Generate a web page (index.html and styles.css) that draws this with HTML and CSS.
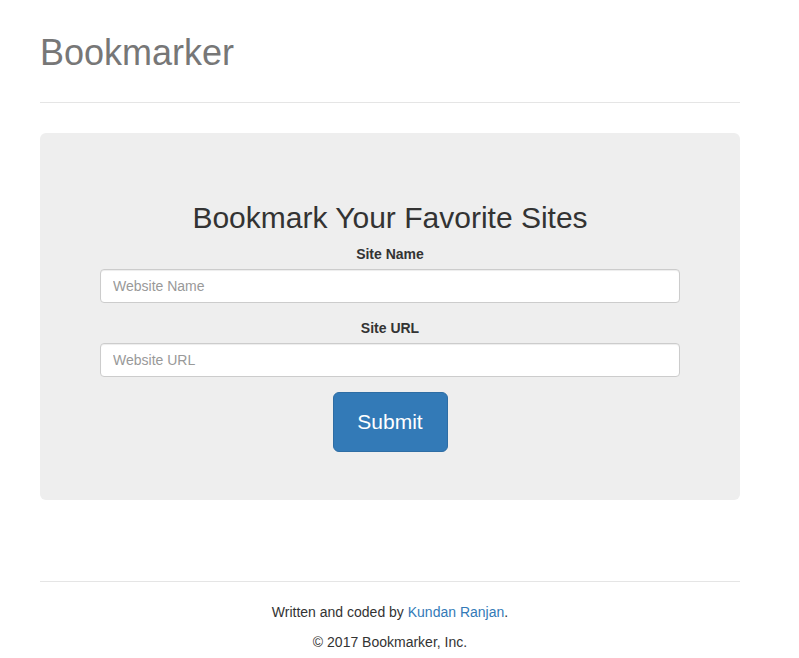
FILE: index.html
```html
<!DOCTYPE html>
<html lang="en">
<head>
<meta charset="utf-8">
<title>Bookmarker</title>
<link rel="stylesheet" href="styles.css">
</head>
<body>
<div class="container">
  <header class="header">
    <h1 class="brand">Bookmarker</h1>
  </header>
  <main class="jumbotron">
    <h2 class="title">Bookmark Your Favorite Sites</h2>
    <form class="form">
      <div class="form-group">
        <label class="label" for="siteName">Site Name</label>
        <input class="input" type="text" id="siteName" placeholder="Website Name">
      </div>
      <div class="form-group">
        <label class="label" for="siteUrl">Site URL</label>
        <input class="input" type="text" id="siteUrl" placeholder="Website URL">
      </div>
      <button type="button" class="btn">Submit</button>
    </form>
  </main>
  <footer class="footer">
    <p class="footer-line">Written and coded by <a class="link" href="#">Kundan Ranjan</a>.</p>
    <p class="footer-line">&copy; 2017 Bookmarker, Inc.</p>
  </footer>
</div>
</body>
</html>
```

FILE: styles.css
```css
* { box-sizing: border-box; }
html, body { margin: 0; padding: 0; background: #fff; }
body {
  font-family: "Liberation Sans", Arial, sans-serif;
  font-size: 14px;
  line-height: 1.42857;
  color: #333;
}
.container {
  width: 700px;
  margin-left: 40px;
  padding-top: 20px;
}
.header {
  padding-bottom: 19px;
  border-bottom: 1px solid #e5e5e5;
}
.brand {
  margin: 13px 0 10px;
  font-size: 36px;
  font-weight: 400;
  line-height: 1.1;
  color: #777;
}
.jumbotron {
  margin-top: 30px;
  background: #eee;
  border-radius: 6px;
  padding: 48px 60px;
  text-align: center;
}
.title {
  margin: 20px 0 10px;
  font-size: 30px;
  font-weight: 400;
  line-height: 1.1;
  color: #333;
}
.form { display: flex; flex-direction: column; align-items: center; }
.form-group { width: 100%; margin-bottom: 15px; display: flex; flex-direction: column; align-items: center; }
.label {
  display: block;
  margin-bottom: 5px;
  font-weight: 700;
  font-size: 14px;
  line-height: 20px;
}
.input {
  display: block;
  width: 100%;
  height: 34px;
  padding: 6px 12px;
  font-family: inherit;
  font-size: 14px;
  line-height: 1.42857;
  color: #555;
  background: #fff;
  border: 1px solid #ccc;
  border-radius: 4px;
  box-shadow: inset 0 1px 1px rgba(0,0,0,.075);
}
.input::placeholder { color: #999; }
.btn {
  display: inline-block;
  width: 115px;
  height: 60px;
  padding: 0;
  font-family: inherit;
  font-size: 21px;
  line-height: 1.3333;
  color: #fff;
  background: #337ab7;
  border: 1px solid #2e6da4;
  border-radius: 6px;
  cursor: pointer;
}
.footer {
  margin-top: 81px;
  padding-top: 20px;
  border-top: 1px solid #e5e5e5;
  text-align: center;
}
.footer-line { margin: 0 0 10px; line-height: 20px; }
.link { color: #337ab7; text-decoration: none; }
```
